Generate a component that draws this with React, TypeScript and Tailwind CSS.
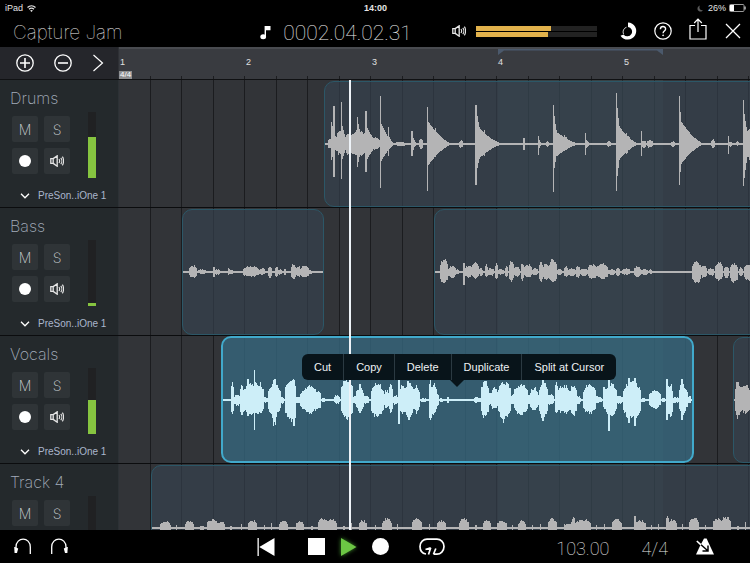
import React from 'react';

/* ---------- timeline data ---------- */

// Width of the track header column; clip and wave positions include it.
const HEADER = 119;

// [from, to, up, down, shape]; shape 'd' decays from the left edge
type Segment = [number, number, number, number, 'd'?];

interface Clip {
  start: number;
  end: number;
  selected?: boolean;
  wave: Segment[];
}

interface Track {
  name: string;
  level: number;
  clips: Clip[];
}

const DRUMS: Segment[] = [
  [328, 378, 8, 7], [331, 340, 22, 16, 'd'], [333, 335, 38, 33], [336, 344, 13, 11],
  [341, 342, 42, 35], [342, 349, 18, 15, 'd'], [345, 352, 12, 11], [349, 350, 33, 28], [350, 368, 14, 13],
  [357, 358, 27, 23], [358, 364, 20, 18, 'd'], [365, 380, 21, 19, 'd'], [365, 367, 33, 28],
  [370, 380, 7, 6], [380, 381, 48, 44], [381, 396, 20, 17, 'd'], [384, 391, 8, 7],
  [388, 389, 17, 12], [394, 407, 2, 2], [411, 413, 13, 12], [412, 417, 9, 8, 'd'],
  [419, 423, 6, 5], [427, 428, 37, 47], [428, 454, 22, 21, 'd'], [428, 442, 8, 8],
  [435, 436, 16, 13], [459, 463, 4, 4], [475, 477, 39, 41], [477, 485, 28, 24, 'd'],
  [477, 505, 18, 16, 'd'], [479, 490, 8, 7], [484, 485, 14, 12], [523, 525, 6, 6],
  [538, 539, 8, 11], [539, 542, 4, 4, 'd'], [546, 549, 3, 3], [553, 554, 39, 48],
  [554, 560, 28, 24, 'd'], [554, 582, 14, 14, 'd'], [558, 568, 9, 8], [585, 586, 11, 11],
  [586, 591, 4, 4, 'd'], [607, 611, 3, 3], [616, 617, 51, 47], [617, 623, 36, 32, 'd'],
  [617, 641, 20, 18, 'd'], [619, 630, 11, 10], [641, 642, 13, 12], [642, 646, 4, 4],
  [647, 653, 4, 4], [671, 675, 3, 3], [679, 680, 48, 41], [680, 685, 32, 28, 'd'],
  [680, 706, 24, 21, 'd'], [711, 715, 5, 4], [728, 729, 8, 10], [729, 732, 3, 3],
  [736, 739, 3, 2], [743, 744, 44, 42], [744, 751, 30, 34, 'd'], [744, 760, 17, 16],
];

const BASS_A: Segment[] = [
  [189, 197, 7, 6], [198, 206, 3, 2], [213, 215, 5, 5], [215, 220, 3, 3], [228, 235, 4, 3, 'd'],
  [228, 234, 2, 2], [243, 259, 6, 5], [259, 265, 4, 3], [268, 272, 6, 6], [275, 278, 6, 6],
  [278, 282, 3, 3], [284, 286, 3, 3], [291, 296, 8, 7], [296, 301, 6, 5], [301, 309, 7, 6], [309, 312, 2, 2],
];

const BASS_B: Segment[] = [
  [440, 448, 13, 12], [448, 456, 6, 6], [456, 459, 3, 3], [463, 465, 9, 13], [465, 472, 7, 6],
  [472, 479, 10, 7], [479, 483, 4, 4], [485, 488, 8, 6], [488, 494, 4, 4], [495, 498, 9, 8],
  [498, 504, 3, 3], [505, 508, 6, 6], [509, 514, 11, 10], [514, 520, 6, 5], [521, 524, 10, 9],
  [524, 532, 8, 6], [532, 538, 4, 3], [539, 543, 12, 10], [543, 549, 9, 9], [549, 557, 13, 11],
  [557, 562, 3, 3], [564, 568, 6, 5], [568, 576, 4, 4], [576, 580, 7, 6], [580, 588, 4, 4],
  [588, 597, 8, 7], [597, 608, 9, 7], [608, 615, 3, 3], [616, 620, 5, 5], [622, 630, 4, 3],
  [634, 641, 6, 5], [641, 648, 3, 3], [649, 652, 3, 2], [692, 701, 11, 12], [701, 707, 7, 6],
  [708, 714, 4, 4], [715, 723, 10, 9], [724, 729, 6, 6], [730, 738, 9, 11], [739, 743, 5, 5], [744, 752, 8, 9],
];

const VOCALS: Segment[] = [
  [231, 234, 19, 16], [234, 241, 6, 6], [240, 244, 16, 16], [243, 264, 18, 16], [247, 249, 21, 16],
  [254, 255, 30, 30], [259, 262, 20, 16], [263, 268, 3, 3], [268, 281, 16, 16], [272, 277, 24, 28],
  [280, 284, 4, 4], [285, 296, 21, 22], [292, 296, 22, 26], [296, 300, 4, 4], [300, 321, 12, 12],
  [303, 317, 15, 14], [321, 326, 2, 2], [334, 340, 5, 4], [341, 353, 22, 20], [353, 357, 5, 4],
  [356, 364, 13, 12], [359, 361, 16, 13], [363, 369, 5, 4], [371, 384, 17, 18], [384, 389, 10, 9],
  [389, 393, 18, 14], [393, 398, 5, 5], [398, 400, 20, 24], [399, 406, 16, 15], [405, 413, 20, 20],
  [412, 420, 13, 12], [415, 418, 16, 14], [420, 428, 2, 2], [429, 432, 21, 23], [431, 437, 18, 16],
  [436, 439, 7, 6], [439, 444, 2, 2], [447, 449, 3, 3], [474, 481, 3, 3], [481, 489, 20, 18], [488, 492, 7, 5],
  [491, 498, 13, 10], [498, 511, 19, 20], [500, 506, 20, 24], [511, 515, 6, 5], [514, 528, 17, 16],
  [527, 530, 6, 5], [530, 538, 13, 11], [537, 540, 6, 5], [539, 548, 19, 19], [542, 544, 21, 21],
  [547, 554, 6, 5], [555, 558, 20, 15], [557, 571, 15, 14], [570, 577, 16, 16], [576, 581, 4, 4],
  [583, 596, 16, 14], [594, 602, 4, 3], [603, 606, 16, 9], [605, 617, 17, 16], [608, 610, 20, 31],
  [615, 623, 5, 4], [623, 641, 19, 20], [628, 630, 22, 23], [634, 636, 22, 26], [640, 646, 2, 2],
  [649, 661, 10, 9], [661, 666, 2, 2], [666, 668, 21, 20], [667, 673, 17, 17], [672, 680, 3, 3],
  [679, 686, 17, 16], [681, 683, 21, 20], [684, 688, 12, 9], [688, 691, 5, 4],
];

const VOCALS_B: Segment[] = [[735, 741, 20, 19], [740, 745, 14, 13], [743, 750, 17, 15], [749, 753, 8, 8]];

const TRACK4: Segment[] = [
  [160, 171, 7, 7], [176, 177, 3, 3], [185, 194, 8, 8], [199, 205, 2, 2], [207, 218, 9, 9],
  [218, 225, 7, 7], [230, 232, 2, 2], [241, 242, 4, 4], [248, 257, 8, 8], [264, 265, 3, 3],
  [271, 272, 5, 5], [279, 288, 8, 8], [296, 304, 7, 7], [311, 313, 2, 2], [318, 329, 10, 10],
  [327, 337, 9, 9], [343, 345, 2, 2], [350, 352, 5, 5], [359, 367, 8, 8], [375, 376, 3, 3],
  [382, 392, 10, 10], [397, 398, 4, 4], [412, 422, 10, 10], [429, 430, 4, 4], [437, 446, 8, 8],
  [459, 469, 10, 10], [475, 477, 3, 3], [483, 491, 8, 8], [497, 507, 8, 8], [512, 513, 3, 3],
  [518, 526, 8, 8], [532, 533, 3, 3], [540, 541, 4, 4], [548, 557, 10, 10], [564, 591, 6, 6],
  [572, 575, 13, 13], [575, 591, 9, 9], [596, 597, 3, 3], [604, 605, 4, 4], [612, 622, 10, 10],
  [634, 636, 12, 12], [635, 646, 8, 8], [651, 652, 3, 3], [658, 659, 4, 4], [666, 669, 13, 13],
  [668, 677, 9, 9], [682, 683, 4, 4], [689, 699, 11, 11], [705, 706, 3, 3], [713, 722, 10, 10],
  [721, 731, 12, 12], [737, 739, 2, 2], [745, 746, 6, 6],
];

const TRACKS: Track[] = [
  { name: 'Drums', level: 62, clips: [{ start: 324, end: 790, wave: DRUMS }] },
  {
    name: 'Bass',
    level: 5,
    clips: [
      { start: 182, end: 324, wave: BASS_A },
      { start: 434, end: 790, wave: BASS_B },
    ],
  },
  {
    name: 'Vocals',
    level: 52,
    clips: [
      { start: 221, end: 694, selected: true, wave: VOCALS },
      { start: 733, end: 790, wave: VOCALS_B },
    ],
  },
  { name: 'Track 4', level: 0, clips: [{ start: 151, end: 790, wave: TRACK4 }] },
];

function noise(n: number) {
  const s = Math.sin(n * 12.9898) * 43758.5453;
  return s - Math.floor(s);
}

// One column per pixel, upper edge left to right, lower edge back again.
function wavePath(clip: Clip) {
  const top: string[] = [];
  const bottom: string[] = [];
  for (let x = clip.start + 1; x < clip.end - 1; x++) {
    let up = 0.8;
    let down = 0.8;
    for (const [from, to, u, d, shape] of clip.wave) {
      if (x < from || x >= to) continue;
      const size = to - from;
      const steady = size < 3 || shape === 'd';
      let env = 1;
      if (shape === 'd') env = Math.pow(1 - (x - from) / size, 1.7);
      else if (size >= 3) {
        const edge = Math.min(x - from, to - 1 - x) + 0.5;
        env = 0.6 + 0.4 * Math.min(1, edge / (size * 0.3));
      }
      const ju = steady ? 1 : 0.76 + 0.24 * noise(x);
      const jd = steady ? 1 : 0.76 + 0.24 * noise(x + 500);
      up = Math.max(up, u * env * ju);
      down = Math.max(down, d * env * jd);
    }
    top.push(`L${x} ${(-up).toFixed(1)}L${x + 1} ${(-up).toFixed(1)}`);
    bottom.unshift(`L${x + 1} ${down.toFixed(1)}L${x} ${down.toFixed(1)}`);
  }
  return `M${clip.start + 1} 0${top.join('')}${bottom.join('')}Z`;
}

/* ---------- icons ---------- */

function Speaker({ className }: { className: string }) {
  return (
    <svg viewBox="0 0 14 12" className={className} fill="none" stroke="currentColor" strokeWidth="1.3">
      <path d="M.8 3.6h2.400v4.800H.8zM3.200 3.600 7.200.8v10.400l-4-2.800" />
      <path d="M9 4c.8 1.200.8 2.800 0 4M10.800 2.800c1.300 1.700 1.300 4.700 0 6.400M12.400 1.600c1.600 2.400 1.600 6.400 0 8.800" strokeWidth="1.100" />
    </svg>
  );
}

/* ---------- top area ---------- */

function StatusBar() {
  return (
    <div className="grid h-4 grid-cols-3 items-center pl-[5px] pr-1 text-[9px] leading-4 text-[#e4e4e4]">
      <div className="flex items-center gap-1">
        <span>iPad</span>
        <svg viewBox="0 0 18 14" className="h-[7px] w-[9px]" fill="none" stroke="currentColor" strokeWidth="2.4">
          <path d="M1 5c4.600-4.400 11.400-4.400 16 0M4 8.500c3-2.800 7-2.800 10 0" />
          <path d="M6.200 10.800 9 13.800l2.800-3c-1.600-1.400-4-1.400-5.600 0z" fill="currentColor" stroke="none" />
        </svg>
      </div>
      <div className="text-center font-bold">14:00</div>
      <div className="flex items-center justify-end gap-[3px]">
        <svg viewBox="0 0 12 14" className="mr-0.5 h-[7px] w-1.5" fill="#5b5b5b">
          <path d="M6 1C1 2-1 9 3.500 12c3 2 7 1 8.300-1.500C6 11.500 3 6 6 1z" />
        </svg>
        <span>26%</span>
        <svg viewBox="0 0 17 8" className="h-2 w-[17px]">
          <rect x=".5" y=".5" width="14.500" height="7" rx="1" fill="none" stroke="#9a9a9a" />
          <rect x="1" y="1" width="4" height="6" fill="#fff" />
          <path d="M16 2.500v3" stroke="#bbb" strokeWidth="1.500" />
        </svg>
      </div>
    </div>
  );
}

function OutputMeter() {
  return (
    <div className="flex flex-1 flex-col gap-px">
      <div className="h-[5px] bg-[#222]">
        <div className="h-full w-[62%] bg-[#e2b24c]" />
      </div>
      <div className="h-[5px] bg-[#222]">
        <div className="h-full w-[60%] bg-[#e2b24c]" />
      </div>
    </div>
  );
}

function TitleBar() {
  return (
    <header className="flex h-[31px] items-center pr-2 pt-[3px] text-white">
      <h1 className="w-[34%] pl-[13px] font-['Inter',sans-serif] text-[19px] font-thin leading-6 text-[#f2f2f2]">
        Capture Jam
      </h1>
      <div className="flex items-center gap-3 pl-2">
        <svg viewBox="0 0 11 14" className="h-[14px] w-[11px]" fill="#fff">
          <path d="M4.600 0H10.500v4.200H6v6.300H4.600z" />
          <ellipse cx="3.200" cy="10.800" rx="2.900" ry="2.500" />
        </svg>
        <output className="font-['Roboto',sans-serif] text-[21px] font-thin leading-6 text-[#ececec]">
          0002.04.02.31
        </output>
      </div>
      <div className="flex flex-1 items-center gap-2.5 pb-1 pl-10 pr-[22px]">
        <Speaker className="h-3 w-[14px] shrink-0 text-[#e8e8e8]" />
        <OutputMeter />
      </div>
      <nav className="flex items-center gap-[17px] pb-1">
        <button type="button" aria-label="Performance">
          <svg viewBox="0 0 18 18" className="size-[18px]">
            <path d="M9 .4A8.600 8.600 0 1 1 1.500 13.800L4.600 12.500A4.700 4.700 0 1 0 9 5z" fill="#fff" />
            <path d="M7.500 5.200a5 5 0 0 0-3 6.800" fill="none" stroke="#ccc" />
          </svg>
        </button>
        <button type="button" aria-label="Help">
          <svg viewBox="0 0 18 18" className="size-[18px]" fill="none" stroke="#fff" strokeWidth="1.200">
            <circle cx="9" cy="9" r="8.200" />
            <path d="M6.400 7.200C6.400 3.600 11.600 3.700 11.600 7c0 2-2.500 2-2.500 4.200" strokeWidth="1.400" />
            <circle cx="9.100" cy="13.300" r=".5" fill="#fff" strokeWidth=".8" />
          </svg>
        </button>
        <button type="button" aria-label="Share" className="-mt-1">
          <svg viewBox="0 0 18 22" className="h-[22px] w-[18px]" fill="none" stroke="#fff" strokeWidth="1.200">
            <path d="M6 7.500H1v13.500h16V7.500h-5M9 14V1M5.200 5 9 1l3.800 4" />
          </svg>
        </button>
        <button type="button" aria-label="Close">
          <svg viewBox="0 0 18 18" className="size-[18px]" stroke="#fff" strokeWidth="1.300">
            <path d="M2 2l14 14M16 2 2 16" />
          </svg>
        </button>
      </nav>
    </header>
  );
}

function Ruler() {
  return (
    <div className="flex h-[33px] border-b border-[#101113]">
      <div className="flex w-[119px] shrink-0 items-center gap-5 border-r border-[#2e3035] bg-[#25262b] pl-4 text-white">
        <button type="button" aria-label="Add track">
          <svg viewBox="0 0 18 18" className="size-[18px]" fill="none" stroke="#fff" strokeWidth="1.300">
            <circle cx="9" cy="9" r="8.200" />
            <path d="M9 4v10M4 9h10" strokeWidth="1.600" />
          </svg>
        </button>
        <button type="button" aria-label="Remove track">
          <svg viewBox="0 0 18 18" className="size-[18px]" fill="none" stroke="#fff" strokeWidth="1.300">
            <circle cx="9" cy="9" r="8.200" />
            <path d="M4 9h10" strokeWidth="1.600" />
          </svg>
        </button>
        <button type="button" aria-label="Expand">
          <svg viewBox="0 0 12 18" className="h-[18px] w-3" fill="none" stroke="#fff" strokeWidth="1.200">
            <path d="M1.500 1 10.500 9l-9 8" />
          </svg>
        </button>
      </div>
      <div className="relative flex-1 overflow-hidden border-t-2 border-[#494b50] bg-[#393b40]">
        <ol className="flex text-[9px] leading-[10px] text-[#e0e0e0]">
          {[1, 2, 3, 4, 5].map((bar) => (
            <li key={bar} className="w-[126px] shrink-0 pl-px pt-2">
              {bar}
            </li>
          ))}
        </ol>
        <svg viewBox="0 0 165 6" className="absolute left-[379px] top-0 h-1.5 w-[165px]" fill="#4b596c">
          <path d="M0 0h165v6l-6-4.500H6L0 6z" />
        </svg>
        <div className="absolute inset-x-0 bottom-0 h-[3px] bg-[repeating-linear-gradient(to_right,transparent_0_31px,#1c1d20_31px_32px,transparent_32px_62px,#1c1d20_62px_63px)]" />
        <span className="absolute bottom-0 left-0 bg-[#8e8f91] px-px text-[8px] leading-[8px] text-white">4/4</span>
      </div>
    </div>
  );
}

/* ---------- tracks ---------- */

function PadButton({ label, children }: { label: string; children: React.ReactNode }) {
  return (
    <button
      type="button"
      aria-label={label}
      className="flex size-[26px] items-center justify-center rounded-[2px] bg-[#2f3437] font-['Inter',sans-serif] text-[14px] font-extralight text-[#d2d6d9]"
    >
      {children}
    </button>
  );
}

function TrackHeader({ name, level }: { name: string; level: number }) {
  return (
    <div className="flex w-[119px] shrink-0 flex-col border-r border-[#2c3135] bg-[#24292c] pt-2">
      <h2 className="pl-2.5 font-['Inter',sans-serif] text-[16px] font-extralight leading-5 text-[#a3acba]">{name}</h2>
      <div className="mt-1 flex items-center gap-[18px] pl-3">
        <div className="grid grid-cols-2 gap-1.5">
          <PadButton label={`Mute ${name}`}>M</PadButton>
          <PadButton label={`Solo ${name}`}>S</PadButton>
          <PadButton label={`Arm ${name}`}>
            <span className="size-3 rounded-full bg-white" />
          </PadButton>
          <PadButton label={`Monitor ${name}`}>
            <Speaker className="h-3 w-[14px] text-[#e6e6e6]" />
          </PadButton>
        </div>
        <div className="flex h-[66px] w-2 flex-col justify-end bg-[#202123]">
          <div className="bg-[#86c440]" style={{ height: `${level}%` }} />
        </div>
      </div>
      <label className="mt-2 flex h-5 items-center gap-2 pl-5 text-[#aab6cc]">
        <svg viewBox="0 0 10 6" className="h-1.5 w-2.5 shrink-0" fill="none" stroke="#fff" strokeWidth="1.300">
          <path d="M1 .8 5 4.800l4-4" />
        </svg>
        <select aria-label={`Input of ${name}`} className="w-20 appearance-none bg-transparent text-[10px] leading-5">
          <option>PreSon..iOne 1</option>
        </select>
      </label>
    </div>
  );
}

function ClipView({ clip }: { clip: Clip }) {
  const width = clip.end - clip.start;
  return (
    <div
      className={
        clip.selected
          ? 'absolute inset-y-0 overflow-hidden rounded-[10px] border-2 border-[#41a9cb] bg-[#36667d]/80'
          : 'absolute bottom-0 top-px overflow-hidden rounded-[10px] border border-[#2c5767] bg-[#364250]/65'
      }
      style={{ left: clip.start - HEADER, width }}
    >
      <svg
        viewBox={`${clip.start} -60 ${width} 120`}
        width={width}
        height={120}
        className={clip.selected ? '-ml-0.5 mt-0.5 max-w-none' : '-ml-px mt-0.5 max-w-none'}
        fill={clip.selected ? '#cdeef8' : '#b4b4b5'}
        shapeRendering="crispEdges"
      >
        <path d={wavePath(clip)} />
      </svg>
    </div>
  );
}

function TrackRow({ track }: { track: Track }) {
  return (
    <section className="flex h-32 shrink-0 border-b border-[#0b0c0e]">
      <TrackHeader name={track.name} level={track.level} />
      <div className="relative flex-1 overflow-hidden bg-[#323438] bg-[repeating-linear-gradient(to_right,transparent_0_31px,#1b1c1f_31px_32px,transparent_32px_62px,#1b1c1f_62px_63px)]">
        <div className="absolute inset-y-0 left-[379px] w-[165px] bg-[#4a7a78]/20" />
        {track.clips.map((clip) => (
          <ClipView key={clip.start} clip={clip} />
        ))}
      </div>
    </section>
  );
}

function ClipMenu() {
  return (
    <div className="absolute left-[302px] top-[274px]">
      <div className="flex divide-x divide-[#2b3a42] overflow-hidden rounded-md bg-[#08141a]">
        {['Cut', 'Copy', 'Delete', 'Duplicate', 'Split at Cursor'].map((item) => (
          <button key={item} type="button" className="h-[26px] whitespace-nowrap px-3 text-[11px] text-[#eef2f4]">
            {item}
          </button>
        ))}
      </div>
      <svg viewBox="0 0 14 7" className="ml-[148px] h-[7px] w-[14px]" fill="#08141a">
        <path d="M0 0h14L7 7z" />
      </svg>
    </div>
  );
}

/* ---------- transport ---------- */

function Transport() {
  return (
    <footer className="flex h-[33px] shrink-0 items-center bg-black text-white">
      <div className="flex flex-[9_1_0%] items-center gap-[18px] pl-3.5">
        <button type="button" aria-label="Undo">
          <svg viewBox="0 0 18 17" className="h-[17px] w-[18px]" fill="none" stroke="#fff" strokeWidth="1.300">
            <path d="M16.300 16V9C16.300-1.500 2-1.500 2 9v3" />
            <path d="M.2 9h.8l3.200 1.500-1.200 4.500H.6z" fill="#fff" stroke="none" />
          </svg>
        </button>
        <button type="button" aria-label="Redo">
          <svg viewBox="0 0 18 17" className="h-[17px] w-[18px]" fill="none" stroke="#fff" strokeWidth="1.300">
            <path d="M1.700 16V9C1.700-1.500 16-1.500 16 9v3" />
            <path d="M17.800 9h-.8l-3.200 1.500 1.200 4.500h2.400z" fill="#fff" stroke="none" />
          </svg>
        </button>
      </div>
      <div className="flex items-center">
        <button type="button" aria-label="Return to start">
          <svg viewBox="0 0 18 18" className="size-[18px]" fill="#fff">
            <path d="M.5 0h1.300v18H.5zM17.500 0v18L2.300 9z" />
          </svg>
        </button>
        <button type="button" aria-label="Stop" className="ml-[33px] size-[17px] bg-white" />
        <button type="button" aria-label="Play" className="ml-4 drop-shadow-[0_0_2px_#3f8a2c]">
          <svg viewBox="0 0 16 18" className="h-[18px] w-4" fill="#6cc644">
            <path d="M0 0v18l15.500-9z" />
          </svg>
        </button>
        <button type="button" aria-label="Record" className="ml-[15px] size-[17px] rounded-full bg-white" />
        <button type="button" aria-label="Loop" className="ml-[30px]">
          <svg viewBox="0 0 26 18" className="h-[18px] w-[26px]" fill="none" stroke="#fff" strokeWidth="1.700">
            <path d="M7 16C3.500 15.500 1 13 1 8.500 1 4 4.500 1.200 8 1.200h10c3.500 0 7 2.800 7 7.300s-3.500 7.700-7 7.700h-3.500M9.500 16.500l2.200-6.700M6.500 11.500l5.200-1.700M14.500 16.200l2.300-5.700" />
          </svg>
        </button>
      </div>
      <div className="flex flex-[10_1_0%] items-center justify-end pr-9 font-['Roboto',sans-serif] text-[18px] font-thin leading-6 text-[#e8e8e8]">
        <button type="button" aria-label="Tempo" className="pt-1">103.00</button>
        <button type="button" aria-label="Time signature" className="ml-8 pt-1">4/4</button>
        <button type="button" aria-label="Metronome" className="ml-7">
          <svg viewBox="0 0 18 17" className="h-[17px] w-[18px]">
            <path d="M8 .5h2.600L18 16.500H0L3.500 9z" fill="#fff" />
            <path d="M2.500 4.500 11.500 12.500M12 7.500v5.500H6.500" fill="none" stroke="#000" strokeWidth="1.500" />
            <path d="M.8 3 5 6.800" stroke="#fff" strokeWidth="1.600" />
          </svg>
        </button>
      </div>
    </footer>
  );
}

export default function App() {
  return (
    <div className="flex h-screen flex-col overflow-hidden bg-black font-['Liberation_Sans',Arial,sans-serif]">
      <StatusBar />
      <TitleBar />
      <Ruler />
      <main className="relative flex flex-1 flex-col overflow-hidden">
        {TRACKS.map((track) => (
          <TrackRow key={track.name} track={track} />
        ))}
        <div className="pointer-events-none absolute inset-y-0 left-[349px] w-0.5 bg-[#eef3f8]" />
        <ClipMenu />
      </main>
      <Transport />
    </div>
  );
}
